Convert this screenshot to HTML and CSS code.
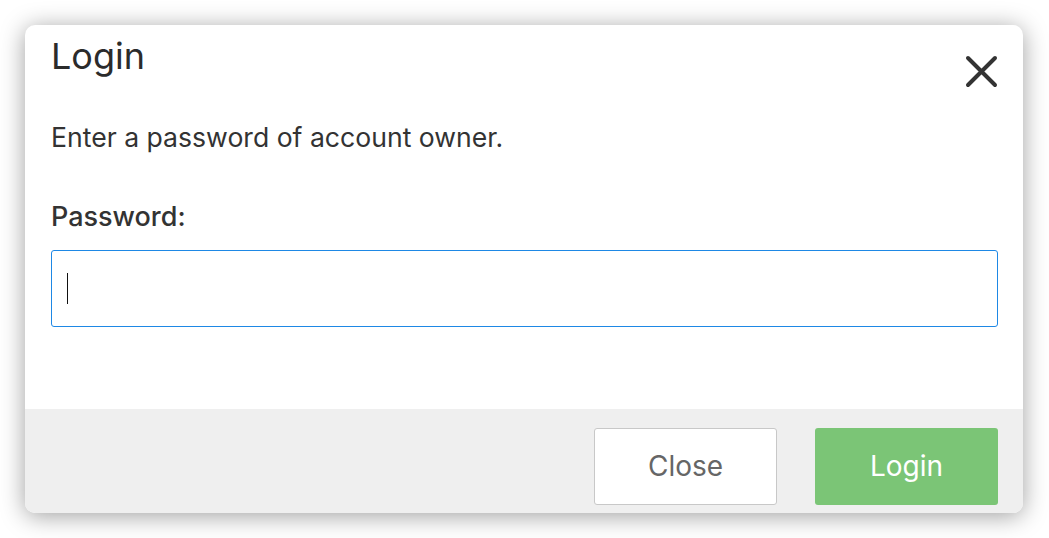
FILE: index.html
```html
<!DOCTYPE html>
<html lang="en">
<head>
    <meta charset="UTF-8">
    <meta name="viewport" content="width=device-width, initial-scale=1.0">
    <title>Login</title>
    <link rel="stylesheet" href="styles.css">
</head>
<body>
    <div id="dialog">
        <div id="dtop">
            <div class="head">
                <h1>Login</h1>
                <div class="close-x">
                    <svg width="33" height="33" viewBox="0 0 33 33">
                        <path d="M3 3 L30 30 M30 3 L3 30" stroke="#333" stroke-width="4" stroke-linecap="round" fill="none"/>
                    </svg>
                </div>
            </div>
            <p class="msg">Enter a password of account owner.</p>
            <label class="lbl" for="pw">Password:</label>
            <div class="field"><span class="caret"></span></div>
        </div>
        <div id="dbtm">
            <div class="btn btn-close">Close</div>
            <div class="btn btn-login">Login</div>
        </div>
    </div>
</body>
</html>
```

FILE: styles.css
```css
*{
    margin: 0;
    padding: 0;
    box-sizing: border-box;
    font-family: "Inter", "Lato", sans-serif;
}
html,body{
    width: 100%;
    height: 100%;
    background-color: #fff;
    overflow: hidden;
}
#dialog{
    margin: 25px 0 0 25px;
    width: 998px;
    height: 488px;
    background-color: #fff;
    border-radius: 10px;
    box-shadow: 0 3px 24px rgba(0, 0, 0, 0.38);
    overflow: hidden;
    display: flex;
    flex-direction: column;
}
#dtop{
    flex: 1;
    padding: 10px 25px 0 26px;
}
.head{
    display: flex;
    justify-content: space-between;
    align-items: flex-start;
}
.head h1{
    font-size: 36px;
    font-weight: 400;
    color: #2b2b2b;
    line-height: 42px;
}
.close-x{
    margin-top: 20px;
    display: flex;
}
.msg{
    margin-top: 34px;
    font-size: 26.6px;
    color: #333;
    line-height: 30px;
}
.lbl{
    display: block;
    margin-top: 50px;
    font-size: 27px;
    font-weight: 500;
    color: #333;
    line-height: 30px;
}
.field{
    margin-top: 18px;
    height: 77px;
    border: 1px solid #1e88e5;
    border-radius: 3px;
    display: flex;
    align-items: center;
    padding-left: 15px;
}
.caret{
    width: 1px;
    height: 31px;
    background-color: #111;
}
#dbtm{
    height: 104px;
    background-color: #efefef;
    display: flex;
    justify-content: flex-end;
    align-items: center;
    gap: 38px;
    padding: 10px 25px 0 0;
}
.btn{
    width: 183px;
    height: 77px;
    border-radius: 3px;
    display: flex;
    justify-content: center;
    align-items: center;
    font-size: 28px;
}
.btn-close{
    background-color: #fff;
    border: 1px solid #c8c8c8;
    color: #666;
}
.btn-login{
    background-color: #7bc576;
    color: #fff;
}
```
